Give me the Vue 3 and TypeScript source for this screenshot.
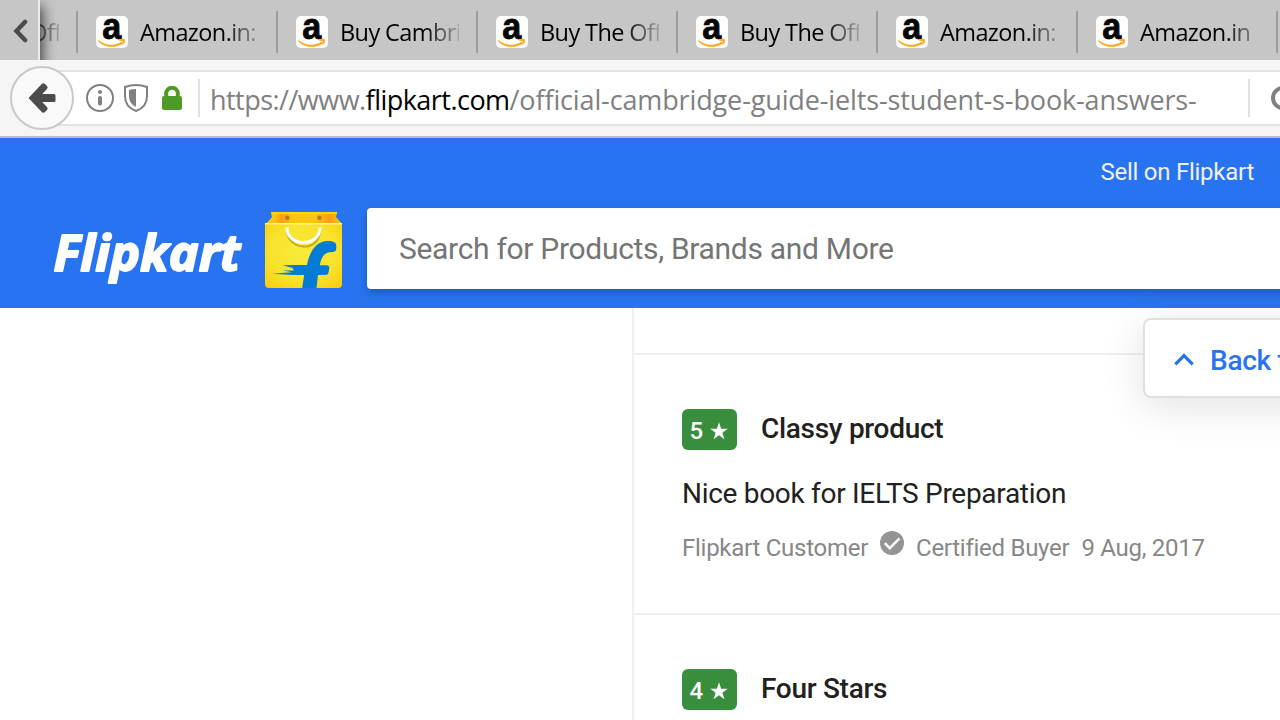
<script setup lang="ts">
interface Review {
  rating: number
  title: string
  text: string
  author: string
  date: string
}

const tabs: string[] = [
  'Buy The Official',
  'Amazon.in: Buy',
  'Buy Cambridge',
  'Buy The Official',
  'Buy The Official',
  'Amazon.in: Buy',
  'Amazon.in',
  'Amazon.in',
]

const reviews: Review[] = [
  { rating: 5, title: 'Classy product', text: 'Nice book for IELTS Preparation', author: 'Flipkart Customer', date: '9 Aug, 2017' },
  { rating: 4, title: 'Four Stars', text: '', author: '', date: '' },
]
</script>

<template>
  <div class="window">
    <div class="tabbar">
      <button class="scroll" aria-label="Scroll tabs">
        <svg width="16" height="26" viewBox="0 0 16 26"><path d="M12.200 3.800 3.400 13l8.800 9.200" fill="none" stroke="#4c4c4c" stroke-width="4.400" stroke-linecap="round" /></svg>
      </button>
      <div class="tabs">
        <div v-for="(t, i) in tabs" :key="i" class="tab">
          <svg class="favicon" width="32" height="32" viewBox="0 0 32 32">
            <rect width="32" height="32" rx="5" fill="#fff" />
            <text x="6.200" y="22.500" textLength="19" lengthAdjust="spacingAndGlyphs" class="fav-a">a</text>
            <path d="M2.700 24.500c6.500 5.800 16 6.200 23 1.600l1 .9c-7 5.200-18.500 4.600-24.300-1.900z" fill="#ff9f0a" stroke="#ff9f0a" stroke-width=".7" />
            <path d="M23.500 24.200c2-1.200 4.300-1.300 5-.6.500.9-.2 3.400-1.800 4.800.3-1.400.9-2.700.5-3.400-.6-.6-2-.5-3.700-.8z" fill="#ff9f0a" stroke="#ff9f0a" stroke-width=".8" />
          </svg>
          <span class="tab-label">{{ t }}</span>
        </div>
      </div>
    </div>

    <div class="navbar">
      <button class="back" aria-label="Back">
        <svg width="30" height="32" viewBox="0 0 30 32">
          <path d="M1.500 16 15 1.800q1.500-1.300 3 .2l2 2q1.400 1.500 0 3L15.200 12H27q1.500 0 1.500 1.500v5q0 1.500-1.500 1.500H15.200l4.800 5q1.400 1.500 0 3l-2 2q-1.500 1.500-3 .2z" fill="#4c4c4c" />
        </svg>
      </button>
      <div class="urlbar">
        <div class="identity">
          <svg width="28" height="28" viewBox="0 0 28 28">
            <circle cx="14" cy="14" r="13" fill="none" stroke="#808080" stroke-width="2" />
            <circle cx="14" cy="8" r="2.100" fill="#808080" /><rect x="12" y="12" width="4" height="9.500" rx="1.800" fill="#808080" />
          </svg>
          <svg width="24" height="28" viewBox="0 0 24 28">
            <path d="M12 1c3.500 0 7.500.7 11 2v9c0 7-4 12.500-11 15C5 24.500 1 19 1 12V3c3.500-1.300 7.500-2 11-2z" fill="none" stroke="#808080" stroke-width="2" />
            <path d="M12 5v18c-4.800-2.200-7-6-7-11V6c2.300-.7 4.500-1 7-1z" fill="#808080" />
          </svg>
          <svg class="lock" width="20" height="24" viewBox="0 0 20 24">
            <path d="M4.200 12V7.500a5.800 5.800 0 0 1 11.600 0V12" fill="none" stroke="#4d9a26" stroke-width="4" />
            <rect y="10" width="20" height="14" rx="2" fill="#4d9a26" />
          </svg>
        </div>
        <div class="url"><span class="url-host">https://www.<b>flipkart.com</b></span><span class="url-path">/official-cambridge-guide-ielts-student-s-book-answers-</span></div>
        <div class="reload">
          <svg width="26" height="26" viewBox="0 0 26 26"><circle cx="13" cy="13" r="10" fill="none" stroke="#808080" stroke-width="4" /></svg>
        </div>
      </div>
    </div>

    <header class="site">
      <div class="toplinks"><a>Sell on Flipkart</a></div>
      <div class="mainrow">
        <svg class="wordmark" width="200" height="64" viewBox="0 0 200 64">
          <text x="7.500" y="45" textLength="187" lengthAdjust="spacingAndGlyphs">Flipkart</text>
        </svg>
        <svg class="bag" width="78" height="78" viewBox="0 0 78 78">
          <defs>
            <radialGradient id="bagFront" cx=".5" cy=".45" r=".72">
              <stop offset="0" stop-color="#f9ea3a" /><stop offset=".6" stop-color="#f8e32c" /><stop offset="1" stop-color="#fccb0c" />
            </radialGradient>
            <linearGradient id="bagTop" x1="0" x2="1" y1="0" y2="0">
              <stop offset="0" stop-color="#ffce00" /><stop offset=".13" stop-color="#ffc20e" /><stop offset=".2" stop-color="#fb9c14" /><stop offset=".35" stop-color="#ffc40c" /><stop offset=".65" stop-color="#ffc40c" /><stop offset=".84" stop-color="#fb9c14" /><stop offset="1" stop-color="#ffce00" />
            </linearGradient>
          </defs>
          <path d="M6 2q0-1 2-1h62q2 0 2 1l-1 4 6 7H1l6-7z" fill="url(#bagTop)" />
          <path d="M6 1h66v2H7z" fill="#ffd60a" />
          <path d="M0 12h77v61q0 4-4 4H4q-4 0-4-4z" fill="url(#bagFront)" />
          <path d="M0 12.800h77" stroke="#fff5a5" stroke-width="1.400" />
          <circle cx="22.300" cy="6.800" r="2.200" fill="#b77a16" /><circle cx="54.500" cy="6.800" r="2.200" fill="#b77a16" />
          <path d="M22 19c1 20 32 22 33 0" transform="translate(0 .8)" fill="none" stroke="#c7a91a" stroke-width="2" />
          <path d="M22 16.500c0 20 33 20 33 0" fill="none" stroke="#fff" stroke-width="3" />
          <path d="M37.200 77c.8-5.500 1.400-9.500 2-13H28L7 62.800l20-1.600-9-1.600 11-.2-1.500-2.400-10-2.800 12-.2H42c3-15.400 10.500-24 20.500-24 6 0 8.800 1.500 8.800 4.500v2.500c0 3-1.500 4-4 4-8 0-11 4.500-12.500 13.300h6.500c2 0 3.200.8 3 2.700l-.7 4.300c-.3 2-1.300 2.700-3.300 2.700h-7.300L51.500 77z" fill="#047bd5" />
        </svg>
        <div class="search">Search for Products, Brands and More</div>
      </div>
    </header>

    <main class="page">
      <section class="reviews">
        <div class="sliver"></div>
        <article v-for="r in reviews" :key="r.title" class="review">
          <div class="head">
            <span class="badge">{{ r.rating }}
              <svg width="18" height="18" viewBox="0 0 18 18"><path d="M9 .3 11.100 6.700h6.600l-5.300 4 2 6.600L9 13.300l-5.400 4 2-6.600-5.300-4h6.600z" fill="#fff" /></svg>
            </span>
            <h3>{{ r.title }}</h3>
          </div>
          <p v-if="r.text" class="text">{{ r.text }}</p>
          <div v-if="r.author" class="meta">
            <span class="author">{{ r.author }}</span>
            <svg width="24" height="24" viewBox="0 0 24 24"><circle cx="12" cy="12" r="12" fill="#949494" /><path d="m4.800 12.200 5 5L19.500 7.300" fill="none" stroke="#fff" stroke-width="2.500" /></svg>
            <span class="buyer">Certified Buyer</span>
            <span class="date">{{ r.date }}</span>
          </div>
        </article>
      </section>
      <button class="totop">
        <svg width="20" height="13" viewBox="0 0 20 13"><path d="M1.300 11.300 10 2.600l8.700 8.700" fill="none" stroke="#2874f0" stroke-width="3.200" /></svg>
        <span>Back to top</span>
      </button>
    </main>
  </div>
</template>

<style>
body { margin: 0; overflow: hidden; }
</style>

<style scoped>
* { box-sizing: border-box; }
.window { width: 1280px; height: 720px; overflow: hidden; background: #fff; font-family: Roboto, sans-serif; display: flex; flex-direction: column; }
button { border: 0; padding: 0; margin: 0; background: none; font: inherit; display: flex; align-items: center; }

.tabbar { flex: none; height: 60px; background: #c6c6c6; display: flex; overflow: hidden; }
.scroll { flex: none; width: 40px; padding: 2px 0 0 13px; border-right: 2px solid #ececec; background: #c6c6c6; position: relative; z-index: 1; box-shadow: 0 8px 14px 2px rgba(0, 0, 0, .75); }
.tabs { display: flex; margin-left: -162px; }
.tab { flex: none; width: 200px; height: 60px; display: flex; align-items: center; padding: 4px 18px 0 18px; gap: 12px; background: linear-gradient(#9d9d9d, #9d9d9d) right 11px / 2px 42px no-repeat; }
.favicon { flex: none; }
.fav-a { font: 700 36px "Liberation Sans", sans-serif; fill: #050505; stroke: #050505; stroke-width: .8px; }
.tab-label { width: 119px; overflow: hidden; white-space: nowrap; font: 23.500px/36px "Open Sans", sans-serif; letter-spacing: -.6px; color: #000; mask-image: linear-gradient(90deg, #000 84px, transparent 126px); }

.navbar { flex: none; height: 78px; background: #f5f5f5; border-bottom: 2px solid #bcbcbc; display: flex; align-items: center; padding-left: 10px; }
.back { flex: none; width: 64px; height: 64px; border: 2px solid #c9c9c9; border-radius: 50%; background: #f9f9f9; padding-left: 15px; position: relative; z-index: 1; }
.urlbar { flex: none; width: 1260px; height: 56px; margin-left: -24px; border: solid #e3e3e3; border-width: 2px 0; background: #fff; display: flex; align-items: center; }
.identity { flex: none; width: 150px; height: 38px; padding-left: 36px; border-right: 2px solid #e1e1e1; display: flex; align-items: center; gap: 10px; }
.lock { margin-left: 4px; }
.url { flex: none; width: 1050px; padding-left: 10px; height: 38px; border-right: 2px solid #e1e1e1; white-space: nowrap; font: 27px/41px "Open Sans", sans-serif; color: #808080; }
.url-host { letter-spacing: -.53px; }
.url-path { letter-spacing: -.13px; }
.url b { font-weight: 400; color: #000; }
.reload { padding-left: 20px; display: flex; }

.site { flex: none; height: 170px; background: #2874f0; }
.toplinks { height: 70px; padding: 18px 26px 0 0; text-align: right; font-size: 24px; line-height: 32px; letter-spacing: -.27px; color: #f0f0f0; }
.mainrow { display: flex; height: 81px; }
.wordmark { flex: none; margin: 18px 0 0 46px; }
.wordmark text { font: italic 700 50px "Open Sans", sans-serif; fill: #fff; stroke: #fff; stroke-width: 1.800px; stroke-linejoin: round; }
.bag { flex: none; margin: 3px 0 0 19px; }
.search { flex: none; width: 950px; height: 81px; margin-left: 24px; padding-left: 32px; border-radius: 4px; background: #fff; box-shadow: 0 4px 8px rgba(0, 0, 0, .23); font-size: 30px; line-height: 81px; letter-spacing: -.31px; color: #757575; }

.page { flex: 1; position: relative; }
.reviews { margin-left: 632px; border-left: 2px solid #f0f0f0; }
.sliver { height: 47px; border-bottom: 2px solid #f0f0f0; }
.review { height: 260px; padding: 54px 0 0 48px; border-bottom: 2px solid #f0f0f0; }
.head { display: flex; align-items: center; height: 41px; gap: 24px; }
.badge { width: 55px; height: 41px; border-radius: 6px; background: #388e3c; color: #fff; font-size: 24px; font-weight: 500; letter-spacing: -.4px; display: flex; align-items: center; padding: 2px 0 0 7.500px; gap: 7px; }
h3 { margin: -2px 0 0; font-size: 28px; line-height: 40px; font-weight: 500; letter-spacing: -.3px; color: #212121; }
.text { margin: 24px 0 0; font-size: 28px; line-height: 40px; letter-spacing: -.3px; color: #212121; }
.meta { display: flex; align-items: center; margin-top: 18px; height: 32px; font-size: 24px; line-height: 32px; letter-spacing: -.27px; color: #878787; }
.meta svg { margin: -10px 12px 0; }
.date { margin-left: 12px; }

.totop { position: absolute; left: 1143px; top: 10px; width: 240px; height: 80px; border: 2px solid #e0e0e0; border-radius: 8px; background: #fff; box-shadow: 0 8px 40px rgba(0, 0, 0, .12); padding-left: 29px; gap: 16px; color: #2874f0; font-size: 28px; font-weight: 500; letter-spacing: -.3px; padding-top: 4px; }
.totop svg { margin-top: -2px; }
</style>
